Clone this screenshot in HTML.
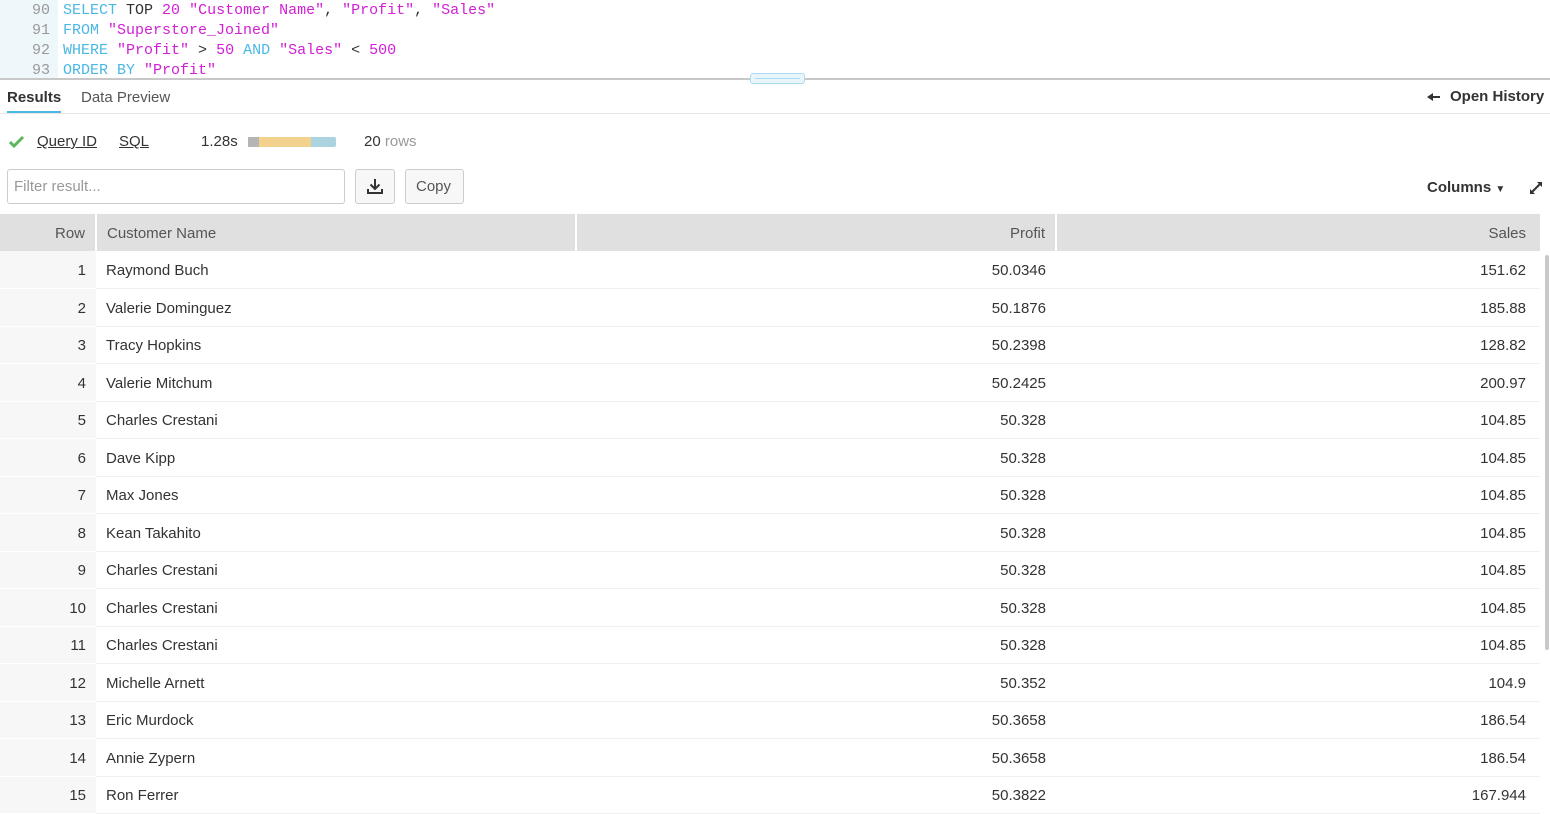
<!DOCTYPE html><html><head><style>
body{margin:0;width:1550px;height:795px;overflow:hidden;font-family:"Liberation Sans",sans-serif;background:#fff;color:#333;position:relative}
.ed{position:absolute;left:0;top:0;width:1550px;height:78px;background:#fff}
.gut{position:absolute;left:0;top:0;width:58px;height:78px;background:#eef8fb}
.ln{position:absolute;font-family:"Liberation Mono",monospace;font-size:15px;white-space:pre;line-height:20px}
.k{color:#4bb8e4}.s{color:#d21fd6}
.sep{position:absolute;left:0;top:78px;width:1550px;height:2px;background:#c8c8c8}
.hdl{position:absolute;left:750px;top:73px;width:53px;height:9px;border:1px solid #a9dbee;border-radius:3px;background:#e8f6fb}
.hdl i{position:absolute;left:4px;right:4px;top:4px;height:1px;background:#a9dbee}
.t{position:absolute;white-space:nowrap}
table{position:absolute;left:0;top:214px;border-collapse:collapse;width:1540px;font-size:15px;table-layout:fixed}
td{height:37.5px;padding:2px 10px 0;border-bottom:1px solid #f0f0f0;box-sizing:border-box;overflow:hidden;white-space:nowrap}
th{height:37px;box-sizing:border-box;background:#e0e0e0;font-weight:normal;color:#555;padding:2px 10px 0;text-align:left;border-left:2px solid #fff;font-size:15px}
th:first-child{border-left:none}
td:first-child{background:#f7f7f7;text-align:right;border-bottom:1px solid #fff}
.r{text-align:right}
tr td:last-child,tr th:last-child{padding-right:14px}
</style></head><body>
<div class="ed"><div class="gut"></div>
<div class="ln" style="left:32px;top:1px;color:#999">90
91
92
93</div>
<div class="ln" style="left:63px;top:1px;color:#333"><span class="k">SELECT</span> TOP <span class="s">20</span> <span class="s">"Customer Name"</span>, <span class="s">"Profit"</span>, <span class="s">"Sales"</span>
<span class="k">FROM</span> <span class="s">"Superstore_Joined"</span>
<span class="k">WHERE</span> <span class="s">"Profit"</span> &gt; <span class="s">50</span> <span class="k">AND</span> <span class="s">"Sales"</span> &lt; <span class="s">500</span>
<span class="k">ORDER BY</span> <span class="s">"Profit"</span></div>
</div>
<div class="sep"></div><div class="hdl"><i></i></div>
<div class="t" style="left:7px;top:89px;font-size:15px;font-weight:bold;color:#333">Results</div>
<div style="position:absolute;left:7px;top:111px;width:54px;height:3px;background:#4bb8e4"></div>
<div class="t" style="left:81px;top:89px;font-size:15px;color:#555">Data Preview</div>
<div style="position:absolute;left:0;top:113px;width:1550px;height:1px;background:#e6e6e6"></div>
<svg style="position:absolute;left:1427px;top:92px" width="14" height="10"><path d="M0 5l6-4v3h7v2H6v3z" fill="#333"/></svg>
<div class="t" style="left:1450px;top:88px;font-size:15px;font-weight:bold;color:#333">Open History</div>
<svg style="position:absolute;left:9px;top:135px" width="16" height="14"><path d="M1 7l4 4 9-9" stroke="#5cb85c" stroke-width="3" fill="none"/></svg>
<div class="t" style="left:37px;top:133px;font-size:15px;text-decoration:underline">Query ID</div>
<div class="t" style="left:119px;top:133px;font-size:15px;text-decoration:underline">SQL</div>
<div class="t" style="left:201px;top:133px;font-size:15px">1.28s</div>
<div style="position:absolute;left:248px;top:137px;width:88px;height:10px;background:#abd3e0;border-radius:2px"><div style="width:63px;height:10px;background:#f2d28d"></div><div style="position:absolute;left:0;top:0;width:11px;height:10px;background:#b5b5b5"></div></div>
<div class="t" style="left:364px;top:133px;font-size:15px">20 <span style="color:#999">rows</span></div>
<div style="position:absolute;left:7px;top:169px;width:336px;height:33px;border:1px solid #ccc;border-radius:3px"></div>
<div class="t" style="left:14px;top:178px;font-size:15px;color:#999">Filter result...</div>
<div style="position:absolute;left:355px;top:169px;width:38px;height:33px;border:1px solid #ccc;border-radius:3px;background:#f7f7f7"><svg width="38" height="33"><path d="M19 9v10M14.5 14.5l4.5 4.5 4.5-4.5M12 19v4h14v-4" stroke="#333" stroke-width="2" fill="none"/></svg></div>
<div style="position:absolute;left:405px;top:169px;width:57px;height:33px;border:1px solid #ccc;border-radius:3px;background:#f7f7f7"></div>
<div class="t" style="left:416px;top:178px;font-size:15px;color:#555">Copy</div>
<div class="t" style="left:1427px;top:179px;font-size:15px;font-weight:bold">Columns <span style="font-size:10px">&#9660;</span></div>
<svg style="position:absolute;left:1529px;top:181px" width="14" height="14"><path d="M8 1h5v5zM1 8v5h5z" fill="#333"/><path d="M3 11l8-8" stroke="#333" stroke-width="2"/></svg>
<table>
<colgroup><col style="width:96px"><col style="width:480px"><col style="width:480px"><col></colgroup>
<tr><th class="r">Row</th><th>Customer Name</th><th class="r">Profit</th><th class="r">Sales</th></tr>
<tr><td>1</td><td>Raymond Buch</td><td class="r">50.0346</td><td class="r">151.62</td></tr>
<tr><td>2</td><td>Valerie Dominguez</td><td class="r">50.1876</td><td class="r">185.88</td></tr>
<tr><td>3</td><td>Tracy Hopkins</td><td class="r">50.2398</td><td class="r">128.82</td></tr>
<tr><td>4</td><td>Valerie Mitchum</td><td class="r">50.2425</td><td class="r">200.97</td></tr>
<tr><td>5</td><td>Charles Crestani</td><td class="r">50.328</td><td class="r">104.85</td></tr>
<tr><td>6</td><td>Dave Kipp</td><td class="r">50.328</td><td class="r">104.85</td></tr>
<tr><td>7</td><td>Max Jones</td><td class="r">50.328</td><td class="r">104.85</td></tr>
<tr><td>8</td><td>Kean Takahito</td><td class="r">50.328</td><td class="r">104.85</td></tr>
<tr><td>9</td><td>Charles Crestani</td><td class="r">50.328</td><td class="r">104.85</td></tr>
<tr><td>10</td><td>Charles Crestani</td><td class="r">50.328</td><td class="r">104.85</td></tr>
<tr><td>11</td><td>Charles Crestani</td><td class="r">50.328</td><td class="r">104.85</td></tr>
<tr><td>12</td><td>Michelle Arnett</td><td class="r">50.352</td><td class="r">104.9</td></tr>
<tr><td>13</td><td>Eric Murdock</td><td class="r">50.3658</td><td class="r">186.54</td></tr>
<tr><td>14</td><td>Annie Zypern</td><td class="r">50.3658</td><td class="r">186.54</td></tr>
<tr><td>15</td><td>Ron Ferrer</td><td class="r">50.3822</td><td class="r">167.944</td></tr>
</table>
<div style="position:absolute;left:1545px;top:255px;width:4px;height:395px;background:#c8c8c8;border-radius:2px"></div>
</body></html>
